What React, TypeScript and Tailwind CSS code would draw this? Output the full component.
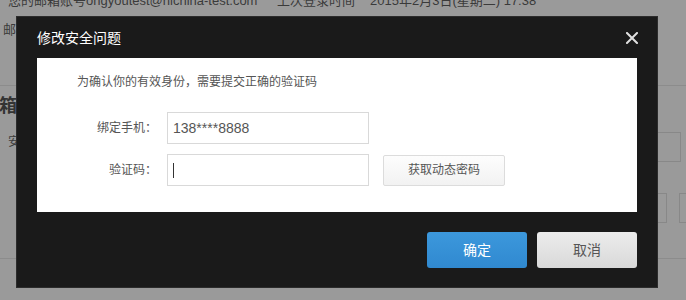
import React from "react";

const CJK = '"Liberation Sans", "Noto Sans CJK SC", sans-serif';

export default function App() {
  return (
    <div
      className="relative w-[686px] h-[300px] overflow-hidden bg-[#9a9a9a] text-[#3a3a3a]"
      style={{ fontFamily: CJK }}
    >
      {/* background page (dimmed) */}
      <div className="flex flex-col">
        <div className="flex items-center h-[14px] -mt-[6px] text-[13px] leading-[14px] whitespace-nowrap">
          <span className="ml-[8px] w-[269px]">您的邮箱账号ongyoutest@hichina-test.com</span>
          <span className="w-[93px]">上次登录时间</span>
          <span>2015年2月3日(星期二) 17:38</span>
        </div>
        <div className="mt-[15px] pl-[3px] text-[13px] leading-[14px]">邮箱</div>
        <div className="mt-[48px] h-px bg-[#8c8c8c]" />
        <div className="mt-[10px] -ml-[1px] text-[18px] leading-[20px] font-bold text-[#333]">箱安全设置</div>
        <div className="mt-[16px] flex h-[30px]">
          <span className="mt-[3px] pl-[8px] text-[12px] leading-[14px]">安全</span>
          <div className="ml-auto mr-[5px] w-[80px] h-[30px] border border-[#888]" />
        </div>
        <div className="mt-[31px] flex h-[30px] pl-[607px] gap-[12px]">
          <div className="w-[60px] h-[30px] shrink-0 border border-[#888]" />
          <div className="w-[40px] h-[30px] shrink-0 border border-[#888]" />
        </div>
        <div className="mt-[35px] h-px bg-[#8c8c8c]" />
      </div>

      {/* modal */}
      <div className="absolute left-[17px] top-[17px] w-[640px] h-[270px] bg-[#1a1a1a] shadow-[0_0_0_1px_#2c2c2c] flex flex-col">
        <div className="flex items-center justify-between h-[41px] pl-[20px] pr-[19px]">
          <span className="text-[14px] leading-[16px] text-white">修改安全问题</span>
          <svg width="12" height="12" viewBox="0 0 12 12">
            <path d="M1 1 L11 11 M11 1 L1 11" stroke="#e0e0e0" strokeWidth="2" strokeLinecap="square" />
          </svg>
        </div>
        <div className="mx-[20px] h-[154px] bg-white pt-[14px] pl-[40px] flex flex-col">
          <div className="text-[12px] leading-[20px] text-[#555]">为确认你的有效身份，需要提交正确的验证码</div>
          <div className="mt-[20px] flex items-center">
            <span className="w-[80px] text-right text-[12px] text-[#555]">绑定手机：</span>
            <div className="ml-[10px] w-[202px] h-[32px] border border-[#d9d9d9] flex items-center pl-[5px] text-[14px] text-[#555]">
              138****8888
            </div>
          </div>
          <div className="mt-[10px] flex items-center">
            <span className="w-[80px] text-right text-[12px] text-[#555]">验证码：</span>
            <div className="ml-[10px] w-[202px] h-[32px] border border-[#d9d9d9] flex items-center pl-[5px]">
              <div className="w-px h-[15px] bg-[#333]" />
            </div>
            <div className="ml-[14px] w-[122px] h-[31px] border border-[#dcdcdc] rounded-[2px] bg-gradient-to-b from-[#fdfdfd] to-[#f2f2f2] flex items-center justify-center text-[12px] text-[#555]">
              获取动态密码
            </div>
          </div>
        </div>
        <div className="mt-[20px] flex justify-end gap-[10px] pr-[20px]">
          <div className="w-[100px] h-[36px] rounded-[3px] bg-gradient-to-b from-[#3c98dc] to-[#3089d0] flex items-center justify-center text-[14px] text-white">
            确定
          </div>
          <div className="w-[100px] h-[36px] rounded-[3px] bg-gradient-to-b from-[#ececec] to-[#d9d9d9] flex items-center justify-center text-[14px] text-[#555]">
            取消
          </div>
        </div>
      </div>
    </div>
  );
}
